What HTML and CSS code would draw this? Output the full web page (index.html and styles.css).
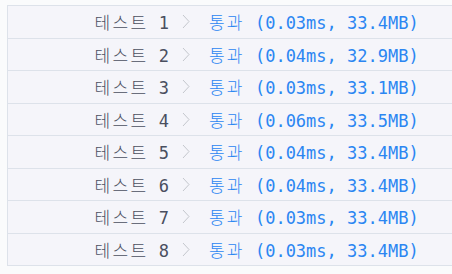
FILE: index.html
```html
<!DOCTYPE html>
<html lang="ko">
<head>
<meta charset="utf-8">
<link rel="stylesheet" href="styles.css">
</head>
<body>
<div class="results">
  <div class="row"><span class="label"><span class="ko">테스트</span> 1</span><span class="sep"><svg width="8" height="15" viewBox="0 0 8 15"><path d="M1 1 L7 7.5 L1 14" fill="none" stroke="#c4c7cd" stroke-width="1"/></svg></span><span class="res"><span class="ko">통과</span> (0.03ms, 33.4MB)</span></div>
  <div class="row"><span class="label"><span class="ko">테스트</span> 2</span><span class="sep"><svg width="8" height="15" viewBox="0 0 8 15"><path d="M1 1 L7 7.5 L1 14" fill="none" stroke="#c4c7cd" stroke-width="1"/></svg></span><span class="res"><span class="ko">통과</span> (0.04ms, 32.9MB)</span></div>
  <div class="row"><span class="label"><span class="ko">테스트</span> 3</span><span class="sep"><svg width="8" height="15" viewBox="0 0 8 15"><path d="M1 1 L7 7.5 L1 14" fill="none" stroke="#c4c7cd" stroke-width="1"/></svg></span><span class="res"><span class="ko">통과</span> (0.03ms, 33.1MB)</span></div>
  <div class="row"><span class="label"><span class="ko">테스트</span> 4</span><span class="sep"><svg width="8" height="15" viewBox="0 0 8 15"><path d="M1 1 L7 7.5 L1 14" fill="none" stroke="#c4c7cd" stroke-width="1"/></svg></span><span class="res"><span class="ko">통과</span> (0.06ms, 33.5MB)</span></div>
  <div class="row"><span class="label"><span class="ko">테스트</span> 5</span><span class="sep"><svg width="8" height="15" viewBox="0 0 8 15"><path d="M1 1 L7 7.5 L1 14" fill="none" stroke="#c4c7cd" stroke-width="1"/></svg></span><span class="res"><span class="ko">통과</span> (0.04ms, 33.4MB)</span></div>
  <div class="row"><span class="label"><span class="ko">테스트</span> 6</span><span class="sep"><svg width="8" height="15" viewBox="0 0 8 15"><path d="M1 1 L7 7.5 L1 14" fill="none" stroke="#c4c7cd" stroke-width="1"/></svg></span><span class="res"><span class="ko">통과</span> (0.04ms, 33.4MB)</span></div>
  <div class="row"><span class="label"><span class="ko">테스트</span> 7</span><span class="sep"><svg width="8" height="15" viewBox="0 0 8 15"><path d="M1 1 L7 7.5 L1 14" fill="none" stroke="#c4c7cd" stroke-width="1"/></svg></span><span class="res"><span class="ko">통과</span> (0.03ms, 33.4MB)</span></div>
  <div class="row"><span class="label"><span class="ko">테스트</span> 8</span><span class="sep"><svg width="8" height="15" viewBox="0 0 8 15"><path d="M1 1 L7 7.5 L1 14" fill="none" stroke="#c4c7cd" stroke-width="1"/></svg></span><span class="res"><span class="ko">통과</span> (0.03ms, 33.4MB)</span></div>
</div>
</body>
</html>
```
FILE: styles.css
```css
html, body {
  margin: 0;
  background: #fafbfc;
  overflow: hidden;
}
body {
  padding: 5px 0 0 7px;
}
.results {
  width: 450px;
  background: #f5f5fa;
  border: 1px solid #dde2ea;
  border-bottom: none;
  border-right: none;
  font-family: "DejaVu Sans Mono", "Noto Sans CJK KR", monospace;
  font-size: 17px;
}
.row {
  display: flex;
  align-items: center;
  height: 31.5px;
  border-bottom: 1px solid #dde2ea;
}
.ko {
  font-family: "Noto Sans CJK KR", sans-serif;
  font-weight: 300;
  letter-spacing: 2.2px;
}
.label {
  width: 161px;
  text-align: right;
  color: #4a4f5f;
  white-space: pre;
}
.label .ko {
  letter-spacing: 2.4px;
}
.sep {
  display: flex;
  align-items: center;
  padding: 0 0 0 13px;
  width: 24px;
}
.res {
  padding-left: 3px;
  color: #2b86f2;
  white-space: pre;
}
```
